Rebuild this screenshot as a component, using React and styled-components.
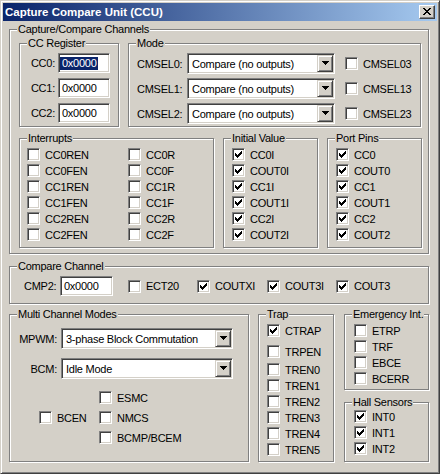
import React from "react";
import styled, { createGlobalStyle } from "styled-components";

const GlobalStyle = createGlobalStyle`
  html, body {
    margin: 0;
    padding: 0;
    background: #d4d0c8;
  }
  body {
    font-family: "Liberation Sans", Arial, sans-serif;
    font-size: 11px;
  }
  * {
    box-sizing: border-box;
  }
`;

const CHECK = [
  "......#",
  ".....##",
  "#...###",
  "##.###.",
  "#####..",
  ".###...",
  "..#....",
];

const ARROW = ["#######", ".#####.", "..###..", "...#..."];

const CROSS = [
  "##....##",
  ".##..##.",
  "..####..",
  "...##...",
  "..####..",
  ".##..##.",
  "##....##",
];

// tiny pixel drawing for the classic glyphs
const Pixels = ({ rows, color = "#000" }) => (
  <svg
    width={rows[0].length}
    height={rows.length}
    shapeRendering="crispEdges"
    style={{ display: "block" }}
  >
    {rows.flatMap((r, y) =>
      [...r].map((c, x) =>
        c === "#" ? (
          <rect key={`${x}-${y}`} x={x} y={y} width="1" height="1" fill={color} />
        ) : null
      )
    )}
  </svg>
);

const Window = styled.div`
  width: 440px;
  height: 474px;
  background: #d4d0c8;
  border: 1px solid;
  border-color: #d4d0c8 #404040 #404040 #d4d0c8;
  box-shadow: inset 1px 1px 0 #fff, inset -1px -1px 0 #808080;
  padding: 2px;
  display: flex;
  flex-direction: column;
  color: #000;
  letter-spacing: -0.25px;
`;

const TitleBar = styled.div`
  height: 18px;
  flex: none;
  display: flex;
  align-items: center;
  justify-content: space-between;
  padding: 0 2px 0 2px;
  background: linear-gradient(to right, #0a246a, #a6caf0);
  color: #fff;
  font-weight: bold;
  font-size: 11.5px;
  letter-spacing: 0;
`;

const CloseButton = styled.div`
  width: 16px;
  height: 14px;
  background: #d4d0c8;
  border: 1px solid;
  border-color: #fff #404040 #404040 #fff;
  box-shadow: inset -1px -1px 0 #808080;
  display: flex;
  align-items: center;
  justify-content: center;
  padding: 0 1px 1px 0;
`;

const Content = styled.div`
  display: flex;
  flex-direction: column;
  padding: 8px 0 0 6px;
`;

const Group = styled.div`
  position: relative;
  flex: none;
  width: ${(p) => p.$w}px;
  height: ${(p) => p.$h}px;
  padding: ${(p) => p.$pad || "0"};
  border: 1px solid #808080;
  box-shadow: inset 1px 1px 0 #fff, 1px 1px 0 #fff;
  margin-top: ${(p) => p.$mt || 0}px;
`;

const GroupLabel = styled.span`
  position: absolute;
  top: -7px;
  left: 7px;
  padding: 0 1px;
  line-height: 13px;
  background: #d4d0c8;
  white-space: nowrap;
`;

const Row = styled.div`
  display: flex;
  align-items: ${(p) => p.$align || "flex-start"};
  gap: ${(p) => p.$gap || 0}px;
`;

const Stack = styled.div`
  display: flex;
  flex-direction: column;
  gap: ${(p) => p.$gap || 0}px;
  margin-top: ${(p) => p.$mt || 0}px;
`;

const FieldRow = styled.div`
  display: flex;
  align-items: center;
  height: ${(p) => p.$h || 20}px;
`;

const FieldLabel = styled.span`
  width: ${(p) => p.$w}px;
  margin-right: ${(p) => p.$mr || 3}px;
  text-align: right;
  white-space: nowrap;
`;

const TextField = styled.div`
  width: ${(p) => p.$w}px;
  height: 20px;
  background: #fff;
  border: 1px solid;
  border-color: #808080 #fff #fff #808080;
  box-shadow: inset 1px 1px 0 #404040, inset -1px -1px 0 #d4d0c8;
  display: flex;
  align-items: center;
  padding-left: 1px;
  white-space: nowrap;
`;

const FieldText = styled.span`
  padding: 0 1px 0 2px;
  line-height: 13px;
  background: ${(p) => (p.$selected ? "#0a246a" : "transparent")};
  color: ${(p) => (p.$selected ? "#fff" : "#000")};
`;

const Dropdown = styled.div`
  width: ${(p) => p.$w}px;
  height: 21px;
  background: #fff;
  border: 1px solid;
  border-color: #808080 #fff #fff #808080;
  box-shadow: inset 1px 1px 0 #404040, inset -1px -1px 0 #d4d0c8;
  display: flex;
  align-items: center;
  padding: 1px;
`;

const DropValue = styled.span`
  flex: 1;
  padding-left: 3px;
  white-space: nowrap;
  overflow: hidden;
`;

const DropButton = styled.div`
  width: 16px;
  height: 17px;
  flex: none;
  background: #d4d0c8;
  border: 1px solid;
  border-color: #d4d0c8 #404040 #404040 #d4d0c8;
  box-shadow: inset 1px 1px 0 #fff, inset -1px -1px 0 #808080;
  display: flex;
  align-items: center;
  justify-content: center;
  padding-bottom: 1px;
`;

const CheckItem = styled.div`
  display: flex;
  align-items: center;
  gap: 5px;
  height: 13px;
  width: ${(p) => (p.$w ? `${p.$w}px` : "auto")};
  margin-left: ${(p) => p.$ml || 0}px;
  margin-top: ${(p) => p.$mt || 0}px;
  white-space: nowrap;
  flex: none;
`;

const Box = styled.span`
  width: 13px;
  height: 13px;
  flex: none;
  background: #fff;
  border: 1px solid;
  border-color: #808080 #fff #fff #808080;
  box-shadow: inset 1px 1px 0 #404040, inset -1px -1px 0 #d4d0c8;
  display: flex;
  align-items: center;
  justify-content: center;
`;

const Check = ({ label, checked, ...rest }) => (
  <CheckItem {...rest}>
    <Box>{checked && <Pixels rows={CHECK} />}</Box>
    <span>{label}</span>
  </CheckItem>
);

const Select = ({ w, value }) => (
  <Dropdown $w={w}>
    <DropValue>{value}</DropValue>
    <DropButton>
      <Pixels rows={ARROW} />
    </DropButton>
  </Dropdown>
);

const CheckList = ({ items, checked }) => (
  <Stack $gap={3}>
    {items.map((t) => (
      <Check key={t} label={t} checked={checked} />
    ))}
  </Stack>
);

export default function App() {
  return (
    <>
      <GlobalStyle />
      <Window>
        <TitleBar>
          <span>Capture Compare Unit (CCU)</span>
          <CloseButton>
            <Pixels rows={CROSS} />
          </CloseButton>
        </TitleBar>

        <Content>
          <Group $w={420} $h={225} $pad="13px 0 0 9px">
            <GroupLabel>Capture/Compare Channels</GroupLabel>
            <Stack $gap={11}>
              <Row $gap={9}>
                <Group $w={100} $h={84} $pad="9px 0 0 0">
                  <GroupLabel>CC Register</GroupLabel>
                  <Stack $gap={5}>
                    {["CC0", "CC1", "CC2"].map((c, i) => (
                      <FieldRow key={c}>
                        <FieldLabel $w={35}>{c}:</FieldLabel>
                        <TextField $w={52}>
                          <FieldText $selected={i === 0}>0x0000</FieldText>
                        </TextField>
                      </FieldRow>
                    ))}
                  </Stack>
                </Group>
                <Group $w={293} $h={84} $pad="9px 0 0 8px">
                  <GroupLabel>Mode</GroupLabel>
                  <Stack $gap={4}>
                    {["0", "1", "2"].map((n) => (
                      <FieldRow key={n} $h={21}>
                        <FieldLabel $w={47} style={{ textAlign: "left" }}>
                          CMSEL{n}:
                        </FieldLabel>
                        <Select w={148} value="Compare (no outputs)" />
                        <Check $ml={10} label={`CMSEL${n}3`} />
                      </FieldRow>
                    ))}
                  </Stack>
                </Group>
              </Row>
              <Row $gap={9}>
                <Group $w={195} $h={110} $pad="9px 0 0 7px">
                  <GroupLabel>Interrupts</GroupLabel>
                  <Row>
                    <div style={{ width: 101 }}>
                      <CheckList
                        items={["CC0REN", "CC0FEN", "CC1REN", "CC1FEN", "CC2REN", "CC2FEN"]}
                      />
                    </div>
                    <CheckList items={["CC0R", "CC0F", "CC1R", "CC1F", "CC2R", "CC2F"]} />
                  </Row>
                </Group>
                <Group $w={95} $h={110} $pad="9px 0 0 8px">
                  <GroupLabel>Initial Value</GroupLabel>
                  <CheckList
                    checked
                    items={["CC0I", "COUT0I", "CC1I", "COUT1I", "CC2I", "COUT2I"]}
                  />
                </Group>
                <Group $w={95} $h={110} $pad="9px 0 0 8px">
                  <GroupLabel>Port Pins</GroupLabel>
                  <CheckList
                    checked
                    items={["CC0", "COUT0", "CC1", "COUT1", "CC2", "COUT2"]}
                  />
                </Group>
              </Row>
            </Stack>
          </Group>

          <Group $w={420} $h={38} $mt={12} $pad="9px 0 0 14px">
            <GroupLabel>Compare Channel</GroupLabel>
            <FieldRow>
              <FieldLabel $w={32} $mr={4}>
                CMP2:
              </FieldLabel>
              <TextField $w={53}>
                <FieldText>0x0000</FieldText>
              </TextField>
              <Check $ml={15} $w={69} label="ECT20" />
              <Check $w={70} checked label="COUTXI" />
              <Check $w={69} checked label="COUT3I" />
              <Check checked label="COUT3" />
            </FieldRow>
          </Group>

          <Row $gap={9} style={{ marginTop: 10 }}>
            <Group $w={240} $h={148} $pad="13px 0 0 6px">
              <GroupLabel>Multi Channel Modes</GroupLabel>
              <Stack $gap={9}>
                <FieldRow $h={21}>
                  <FieldLabel $w={41} $mr={4}>
                    MPWM:
                  </FieldLabel>
                  <Select w={172} value="3-phase Block Commutation" />
                </FieldRow>
                <FieldRow $h={21}>
                  <FieldLabel $w={41} $mr={4}>
                    BCM:
                  </FieldLabel>
                  <Select w={172} value="Idle Mode" />
                </FieldRow>
              </Stack>
              <Row $align="center" style={{ marginTop: 12, paddingLeft: 23 }}>
                <Check $w={60} label="BCEN" />
                <Stack $gap={7}>
                  <Check label="ESMC" />
                  <Check label="NMCS" />
                  <Check label="BCMP/BCEM" />
                </Stack>
              </Row>
            </Group>

            <Group $w={76} $h={148} $pad="9px 0 0 8px">
              <GroupLabel>Trap</GroupLabel>
              <Check checked label="CTRAP" />
              <Check $mt={8} label="TRPEN" />
              <Stack $gap={3} $mt={5}>
                {["TREN0", "TREN1", "TREN2", "TREN3", "TREN4", "TREN5"].map((t) => (
                  <Check key={t} label={t} />
                ))}
              </Stack>
            </Group>

            <Stack $gap={12} style={{ marginLeft: 1 }}>
              <Group $w={85} $h={76} $pad="9px 0 0 9px">
                <GroupLabel>Emergency Int.</GroupLabel>
                <CheckList items={["ETRP", "TRF", "EBCE", "BCERR"]} />
              </Group>
              <Group $w={85} $h={60} $pad="7px 0 0 9px">
                <GroupLabel>Hall Sensors</GroupLabel>
                <CheckList checked items={["INT0", "INT1", "INT2"]} />
              </Group>
            </Stack>
          </Row>
        </Content>
      </Window>
    </>
  );
}
